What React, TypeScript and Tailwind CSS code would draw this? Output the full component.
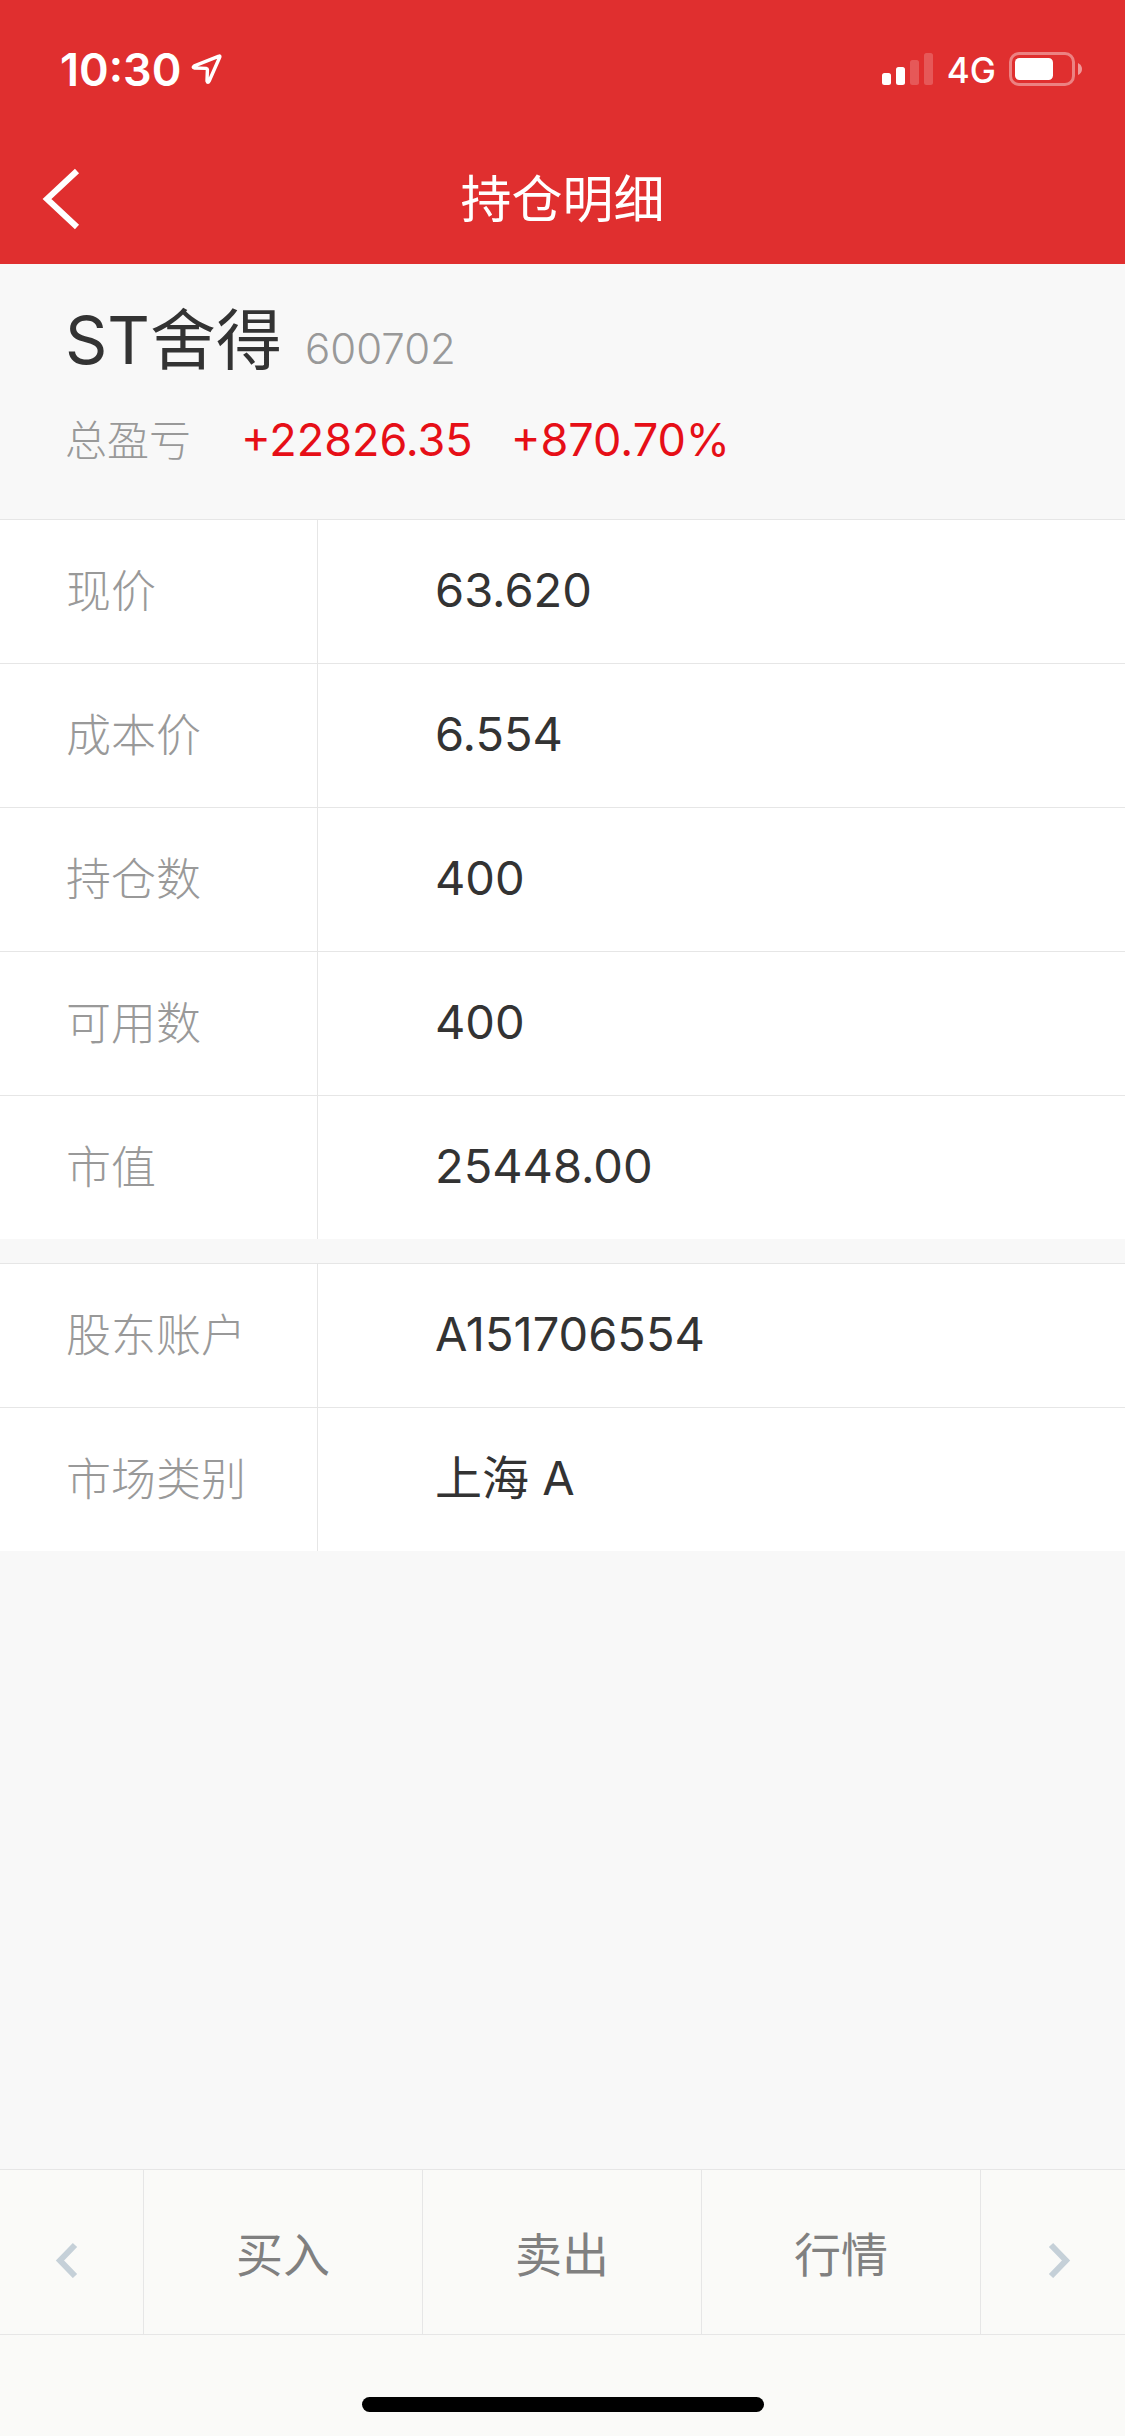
const positionRows = [
  ["现价", "63.620"],
  ["成本价", "6.554"],
  ["持仓数", "400"],
  ["可用数", "400"],
  ["市值", "25448.00"],
];

const accountRows = [
  ["股东账户", "A151706554"],
  ["市场类别", "上海 A"],
];

const actions = ["买入", "卖出", "行情"];

function StatusBar() {
  return (
    <div className="flex h-[138px] items-center justify-between pr-[43px] pl-[60px] text-white">
      <div className="flex items-center gap-[10px]">
        <span className="text-[45px] leading-none font-semibold">10:30</span>
        <svg width="31" height="32" viewBox="0 0 31 32" fill="none" aria-hidden="true">
          <path
            d="M28 3.2 L3.4 12.9 Q1 14.6 3.5 15 L15.2 15.4 Q16.4 15.6 16.4 16.6 L16 28 Q16.8 30.8 18.2 28 L28.8 4 Q29.2 2.7 28 3.2 Z"
            stroke="white"
            strokeWidth="3.4"
            strokeLinejoin="round"
          />
        </svg>
      </div>
      <div className="flex items-center">
        <svg width="51" height="34" viewBox="0 0 51 34" fill="white" aria-hidden="true">
          <rect x="0" y="21" width="9" height="12" rx="2.5" />
          <rect x="14" y="15" width="9" height="18" rx="2.5" />
          <rect x="28" y="8" width="9" height="25" rx="2.5" opacity="0.2" />
          <rect x="42" y="1" width="9" height="32" rx="2.5" opacity="0.2" />
        </svg>
        <span className="ml-[14px] pt-[2px] text-[35px] leading-none font-[450]">4G</span>
        <svg className="ml-[13px]" width="73" height="34" viewBox="0 0 73 34" fill="none" aria-hidden="true">
          <rect x="1.5" y="1.5" width="63" height="31" rx="8.5" stroke="white" strokeOpacity="0.4" strokeWidth="3" />
          <rect x="6" y="6" width="38" height="22" rx="4.5" fill="white" />
          <path d="M69 11 Q73 13 73 17 Q73 21 69 23 Z" fill="white" fillOpacity="0.5" />
        </svg>
      </div>
    </div>
  );
}

function DetailTable({ label, rows }: { label: string; rows: string[][] }) {
  return (
    <table aria-label={label} className="w-full table-fixed border-separate border-spacing-0 bg-white">
      <tbody>
        {rows.map(([name, value]) => (
          <tr key={name} className="h-36">
            <th
              scope="row"
              className="w-[318px] border-t border-r border-[#e6e6e6] p-0 pl-[66px] text-left text-[45px] leading-none font-light text-[#999999]"
            >
              {name}
            </th>
            <td className="border-t border-[#e6e6e6] p-0 pb-1 pl-[117px] text-[47px] leading-none font-[375] text-[#333333]">
              {value}
            </td>
          </tr>
        ))}
      </tbody>
    </table>
  );
}

export default function App() {
  return (
    <div className="flex min-h-screen flex-col bg-[#f8f8f8] font-['Inter','Noto_Sans_CJK_SC',sans-serif]">
      <header className="bg-[#e02f2f]">
        <StatusBar />
        <div className="grid h-[126px] grid-cols-[1fr_auto_1fr] items-center pb-1 text-white">
          <button type="button" aria-label="返回" className="ml-[42px] w-fit">
            <svg width="38" height="62" viewBox="0 0 38 62" fill="none" aria-hidden="true">
              <path d="M35 3 L5 31 L35 59" stroke="white" strokeWidth="6" />
            </svg>
          </button>
          <h1 className="text-[51px] leading-none font-[375]">持仓明细</h1>
        </div>
      </header>

      <main className="flex-1">
        <section className="flex h-[255px] flex-col gap-[34px] px-[65px] pt-10">
          <div className="flex items-baseline gap-[23px]">
            <h2 className="text-[66px] leading-[72px] font-[375] text-[#333333]">ST舍得</h2>
            <span className="text-[42px] leading-none font-light text-[#999999]">600702</span>
          </div>
          <div className="flex items-baseline text-[45px] leading-[60px] font-[375] text-[#e60f17]">
            <span className="w-[176px] text-[42px] font-light text-[#999999]">总盈亏</span>
            <span>+22826.35</span>
            <span className="ml-[38px]">+870.70%</span>
          </div>
        </section>
        <div className="flex flex-col gap-6">
          <DetailTable label="持仓" rows={positionRows} />
          <DetailTable label="账户" rows={accountRows} />
        </div>
      </main>

      <footer className="bg-[#fafaf8]">
        <nav className="flex h-[166px] border-y border-[#e6e6e6] text-[47px] font-[375] text-[#808080]">
          <button type="button" aria-label="上一个" className="flex w-36 items-center border-r border-[#e6e6e6] pt-4 pl-[54px]">
            <svg width="24" height="36" viewBox="0 0 24 36" fill="none" aria-hidden="true">
              <path d="M21 3 L6 18.500 L21 34" stroke="#c5d0d8" strokeWidth="6" />
            </svg>
          </button>
          {actions.map((action) => (
            <button key={action} type="button" className="flex-1 border-r border-[#e6e6e6] pt-1 leading-none">
              {action}
            </button>
          ))}
          <button type="button" aria-label="下一个" className="flex w-36 items-center justify-end pt-4 pr-[54px]">
            <svg width="24" height="36" viewBox="0 0 24 36" fill="none" aria-hidden="true">
              <path d="M4 3 L19 18.500 L4 34" stroke="#c5d0d8" strokeWidth="6" />
            </svg>
          </button>
        </nav>
        <div className="flex h-[101px] justify-center pt-[62px]">
          <div className="h-[15px] w-[402px] rounded-full bg-black" />
        </div>
      </footer>
    </div>
  );
}
